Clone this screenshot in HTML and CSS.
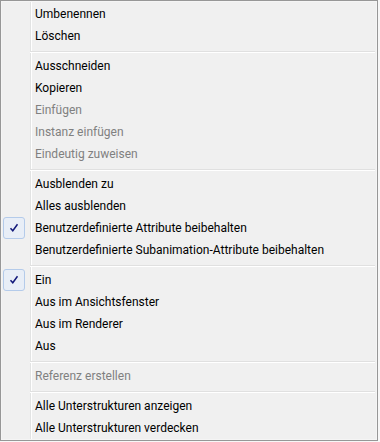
FILE: index.html
```html
<!DOCTYPE html>
<html lang="de">
<head>
<meta charset="UTF-8">
<title>Kontextmenü</title>
<link rel="stylesheet" href="styles.css">
</head>
<body>
    <ul class="menu">
        <li class="item"><span class="check"></span><span class="label">Umbenennen</span></li>
        <li class="item"><span class="check"></span><span class="label">Löschen</span></li>
        <li class="sep"></li>
        <li class="item"><span class="check"></span><span class="label">Ausschneiden</span></li>
        <li class="item"><span class="check"></span><span class="label">Kopieren</span></li>
        <li class="item disabled"><span class="check"></span><span class="label">Einfügen</span></li>
        <li class="item disabled"><span class="check"></span><span class="label">Instanz einfügen</span></li>
        <li class="item disabled"><span class="check"></span><span class="label">Eindeutig zuweisen</span></li>
        <li class="sep"></li>
        <li class="item"><span class="check"></span><span class="label">Ausblenden zu</span></li>
        <li class="item"><span class="check"></span><span class="label">Alles ausblenden</span></li>
        <li class="item checked">
            <span class="check">
                <svg width="10" height="10" viewBox="0 0 10 10"><path d="M1.5 5.2 L3.8 7.8 L8.5 1.2" fill="none" stroke="#11187a" stroke-width="1.5"/></svg>
            </span>
            <span class="label">Benutzerdefinierte Attribute beibehalten</span>
        </li>
        <li class="item"><span class="check"></span><span class="label">Benutzerdefinierte Subanimation-Attribute beibehalten</span></li>
        <li class="sep"></li>
        <li class="item checked">
            <span class="check">
                <svg width="10" height="10" viewBox="0 0 10 10"><path d="M1.5 5.2 L3.8 7.8 L8.5 1.2" fill="none" stroke="#11187a" stroke-width="1.5"/></svg>
            </span>
            <span class="label">Ein</span>
        </li>
        <li class="item"><span class="check"></span><span class="label">Aus im Ansichtsfenster</span></li>
        <li class="item"><span class="check"></span><span class="label">Aus im Renderer</span></li>
        <li class="item"><span class="check"></span><span class="label">Aus</span></li>
        <li class="sep"></li>
        <li class="item disabled"><span class="check"></span><span class="label">Referenz erstellen</span></li>
        <li class="sep"></li>
        <li class="item"><span class="check"></span><span class="label">Alle Unterstrukturen anzeigen</span></li>
        <li class="item"><span class="check"></span><span class="label">Alle Unterstrukturen verdecken</span></li>
    </ul>
</body>
</html>
```

FILE: styles.css
```css
body {
    margin: 0;
    padding: 0;
    background-color: #f7f7f7;
    font-family: Roboto, "Noto Sans", sans-serif;
    font-size: 12px;
}

.menu {
    list-style: none;
    margin: 0;
    padding: 2px;
    width: 378px;
    height: 441px;
    box-sizing: border-box;
    border: 1px solid #979797;
    box-shadow: inset 0 0 0 1px #f5f5f5;
    background-color: #f0f0f0;
    /* gutter line next to the check column */
    background-image: linear-gradient(to right,
        transparent 29px, #e2e3e3 29px, #e2e3e3 30px,
        #ffffff 30px, #ffffff 31px, transparent 31px);
}

.item {
    display: flex;
    align-items: center;
    height: 22px;
    color: #000;
}

.item .check {
    width: 22px;
    height: 22px;
    margin-right: 10px;
    box-sizing: border-box;
    display: flex;
    align-items: center;
    justify-content: center;
}

.item.checked .check {
    background-color: #e8eef7;
    border: 1px solid #b4cbea;
    border-radius: 3px;
}

.item .label {
    line-height: 22px;
    white-space: nowrap;
}

.item.disabled {
    color: #808080;
}

.sep {
    height: 8px;
    margin-left: 27px;
    background-image: linear-gradient(to bottom,
        transparent 4px, #e0e0e0 4px, #e0e0e0 5px,
        #ffffff 5px, #ffffff 6px, transparent 6px);
}
```
